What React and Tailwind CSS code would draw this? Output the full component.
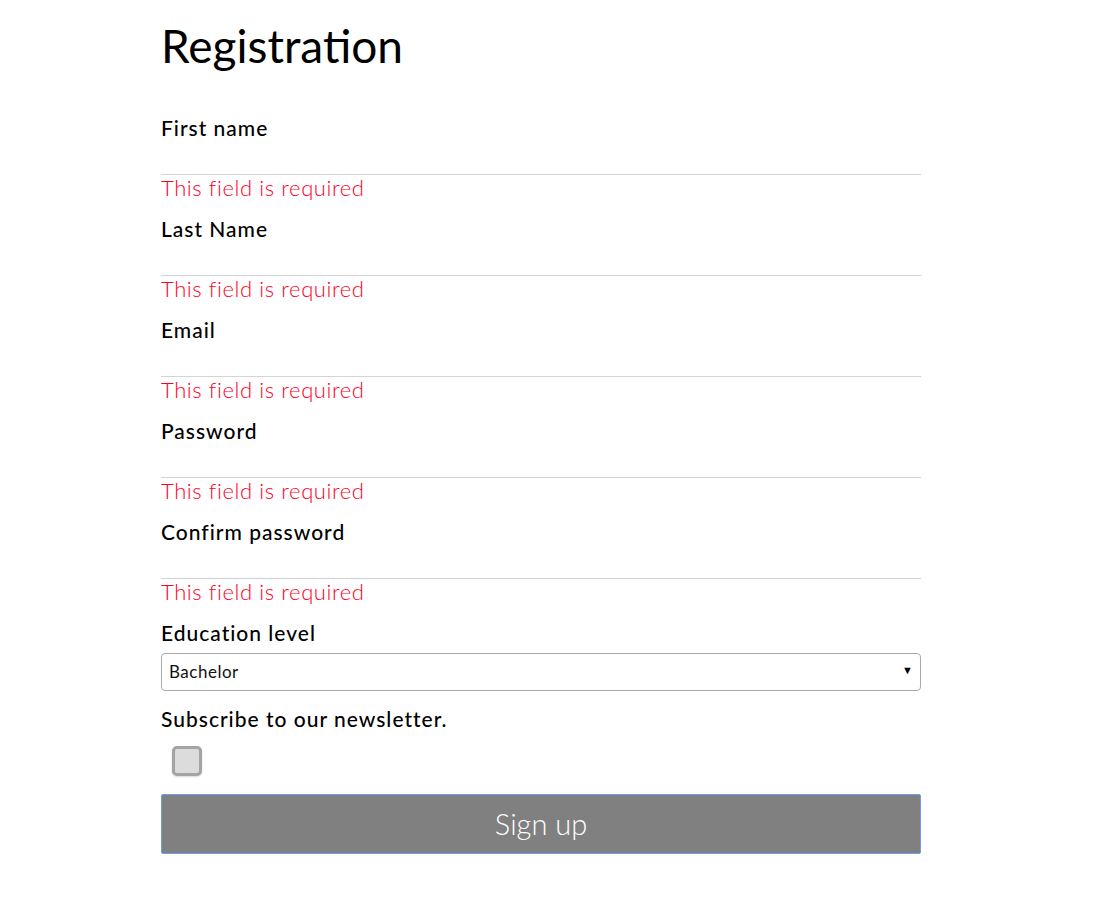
import React from "react";

const FIELDS = ["First name", "Last Name", "Email", "Password", "Confirm password"];

function Field({ label }) {
  return (
    <div className="mb-4">
      <label className="block text-[21px] leading-[24px] font-medium tracking-[1px] text-black">{label}</label>
      <input
        type="text"
        className="block w-full h-[35px] border-0 border-b border-[#d4d4d4] bg-transparent outline-none"
      />
      <div className="text-[22px] leading-[26px] font-light tracking-[0.6px] text-[#ff0026]">This field is required</div>
    </div>
  );
}

export default function App() {
  return (
    <div className="min-h-[923px] bg-white" style={{ fontFamily: "Lato, 'Open Sans', sans-serif" }}>
      <form className="w-[760px] ml-[161px] pt-[17px]">
        <h1 className="text-[46px] leading-[58px] font-normal text-black mb-[41px]">Registration</h1>

        {FIELDS.map((f) => (
          <Field key={f} label={f} />
        ))}

        <label className="block text-[21px] leading-[24px] font-medium tracking-[1px] text-black">Education level</label>
        <div className="relative mt-[8px] h-[38px] border border-[#a9a9a9] rounded-[4px] flex items-center px-[7px]">
          <span className="text-[17px] tracking-[0.5px] text-[#111]">Bachelor</span>
          <span className="absolute right-[7px] top-[8px] text-[11px] text-black">▼</span>
        </div>

        <div className="mt-4 text-[21px] leading-[24px] font-medium tracking-[1px] text-black">Subscribe to our newsletter.</div>
        <div className="mt-[15px] ml-[11px] w-[30px] h-[30px] rounded-[5px] border-[3px] border-[#a4a4a4] bg-[#dcdcdc] shadow-[0_1px_2px_rgba(0,0,0,0.15)]" />

        <button
          type="button"
          className="mt-[18px] w-full h-[60px] bg-[#808080] border border-[#6a9cf0] rounded-[2px] text-white text-[29px] font-light"
        >
          Sign up
        </button>
      </form>
    </div>
  );
}
